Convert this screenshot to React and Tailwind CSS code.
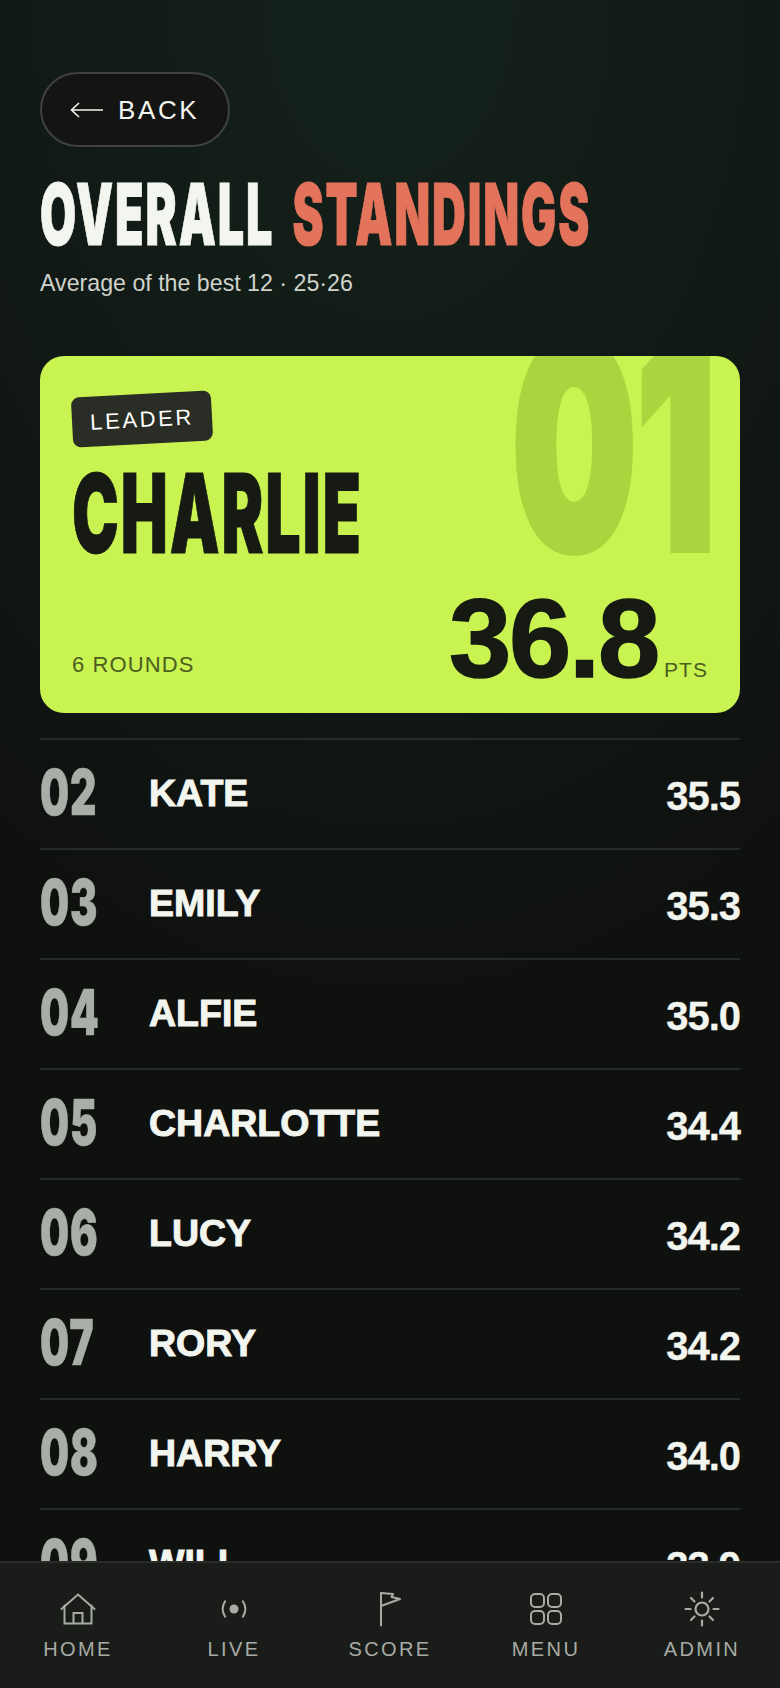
const rows = [
  ["02", "KATE", "35.5"],
  ["03", "EMILY", "35.3"],
  ["04", "ALFIE", "35.0"],
  ["05", "CHARLOTTE", "34.4"],
  ["06", "LUCY", "34.2"],
  ["07", "RORY", "34.2"],
  ["08", "HARRY", "34.0"],
  ["09", "WILL", "33.9"],
];

const Home = () => (
  <svg width="36" height="32" viewBox="0 0 36 32" fill="none" stroke="currentColor" strokeWidth="2" strokeLinejoin="miter" strokeLinecap="round">
    <path d="M1.500 16 18 1.500 34.500 16" />
    <path d="M4.500 12.500V30.500H31.500V12.500" />
    <path d="M13.500 30V20H22.500V30" />
  </svg>
);
const Live = () => (
  <svg width="26" height="18" viewBox="0 0 26 18" fill="none" stroke="currentColor" strokeWidth="2.200" strokeLinecap="round">
    <circle cx="13" cy="9" r="4.500" fill="currentColor" stroke="none" />
    <path d="M4 1.500c-3 4.500-3 10.500 0 15" />
    <path d="M22 1.500c3 4.500 3 10.500 0 15" />
  </svg>
);
const Flag = () => (
  <svg width="24" height="36" viewBox="0 0 24 36" fill="none" stroke="currentColor" strokeWidth="2" strokeLinejoin="round" strokeLinecap="round">
    <path d="M3 34.500V2" />
    <path d="M3 2 15 3 13.500 6 22 8 3 15" />
  </svg>
);
const Menu = () => (
  <svg width="32" height="32" viewBox="0 0 32 32" fill="none" stroke="currentColor" strokeWidth="2">
    <rect x="1" y="1" width="13" height="13" rx="4" />
    <rect x="18" y="1" width="13" height="13" rx="4" />
    <rect x="1" y="18" width="13" height="13" rx="4" />
    <rect x="18" y="18" width="13" height="13" rx="4" />
  </svg>
);
const Admin = () => (
  <svg width="36" height="36" viewBox="0 0 36 36" fill="none" stroke="currentColor" strokeWidth="2.200" strokeLinecap="round">
    <circle cx="18" cy="18" r="6.500" />
    <path d="M18 1.500v5M18 29.500v5M1.500 18h5M29.500 18h5M7 7l3.500 3.500M25.500 25.500 29 29M7 29l3.500-3.500M25.500 10.500 29 7" />
  </svg>
);

const nav = [
  ["HOME", Home],
  ["LIVE", Live],
  ["SCORE", Flag],
  ["MENU", Menu],
  ["ADMIN", Admin],
];

const display = "font-['Inter',sans-serif] font-black origin-left whitespace-nowrap";
const body = "font-['Liberation_Sans',Arial,sans-serif]";

export default function App() {
  return (
    <div className={`${body} relative w-[780px] h-[1688px] overflow-hidden bg-[radial-gradient(ellipse_90%_60%_at_50%_0%,#15221b_0%,#111a16_50%,#0f110f_100%)] text-[#f3f5ef] flex flex-col`}>
      <div className="flex-1 min-h-0 overflow-hidden px-10 pt-[72px]">
        <div className="inline-flex items-center h-[75px] w-[190px] rounded-full border-2 border-[#3f423e] bg-[#141512] pl-[28px] gap-[15px] text-[26px] tracking-[0.1em] text-[#f3f5ef]">
          <svg width="33" height="18" viewBox="0 0 33 18" fill="none" stroke="currentColor" strokeWidth="1.600" className="shrink-0">
            <path d="M1 9H33M9 2 1.500 9 9 16" />
          </svg>
          <span className="leading-none">BACK</span>
        </div>
        <h1 className={`${display} mt-[25px] h-[86px] text-[85px] leading-[86px] scale-x-[0.55] tracking-[0.04em] [word-spacing:0.15em] [-webkit-text-stroke:1px_currentColor]`}>
          OVERALL <span className="text-[#e4735c]">STANDINGS</span>
        </h1>
        <p className="mt-[10px] text-[23.200px] leading-[30px] text-[#cfd3cc]">Average of the best 12 · 25·26</p>

        <section className="relative mt-[58px] h-[357px] rounded-3xl bg-[#c8f350] overflow-hidden px-8 text-[#161a12]">
          <div className={`${display} absolute left-[472px] top-[-56px] text-[287px] leading-[290px] text-[#abd53f] scale-x-[0.61] [-webkit-text-stroke:8px_currentColor]`}>01</div>
          <div className="relative mt-[38px] inline-flex items-center justify-center w-[140px] h-[50px] rounded-lg bg-[#2a2d25] -rotate-3 text-white text-[22px] tracking-[0.12em]">LEADER</div>
          <div className={`${display} relative mt-[24px] text-[110px] leading-[90px] h-[90px] scale-x-[0.57] tracking-[0.03em] [-webkit-text-stroke:1px_currentColor]`}>CHARLIE</div>
          <div className="absolute left-8 right-8 bottom-[24px] flex items-end justify-between">
            <span className="text-[22px] leading-none tracking-[0.05em] text-[#4c5e1f] mb-[13px]">6 ROUNDS</span>
            <span className="flex items-end gap-[6px]">
              <span className="font-bold text-[112px] leading-[90px] mb-[5px] tracking-[-0.02em] [-webkit-text-stroke:1.500px_currentColor]">36.8</span>
              <span className="text-[21px] leading-none tracking-[0.05em] text-[#4c5e1f] mb-[9px]">PTS</span>
            </span>
          </div>
        </section>

        <ul className="mt-[25px]">
          {rows.map(([rank, name, score]) => (
            <li key={rank} className="relative flex items-start h-[110px] border-t-2 border-[#272b28]">
              <span className="w-[109px] shrink-0 pt-[27px]">
                <span className={`${display} block text-[63px] leading-[50px] h-[50px] text-[#a9aea7] scale-x-[0.65] tracking-[0.02em] [-webkit-text-stroke:0.6px_currentColor]`}>{rank}</span>
              </span>
              <span className="flex-1 pt-[34px] font-bold text-[37.500px] leading-[38px] [-webkit-text-stroke:1px_currentColor]">{name}</span>
              <span className="pt-[36px] font-bold text-[40px] leading-[40px] tracking-[-0.025em] [-webkit-text-stroke:0.3px_currentColor]">{score}</span>
            </li>
          ))}
        </ul>
      </div>
      <nav className="h-[127px] shrink-0 border-t-2 border-[#2a2d2a] bg-[#191c19] grid grid-cols-5 pt-[28px] text-[#a8aba5]">
        {nav.map(([label, Icon]) => (
          <div key={label} className="flex flex-col items-center">
            <div className="h-[36px] flex items-center justify-center"><Icon /></div>
            <span className="mt-[12px] text-[20px] leading-[20px] tracking-[0.12em]">{label}</span>
          </div>
        ))}
      </nav>
    </div>
  );
}
